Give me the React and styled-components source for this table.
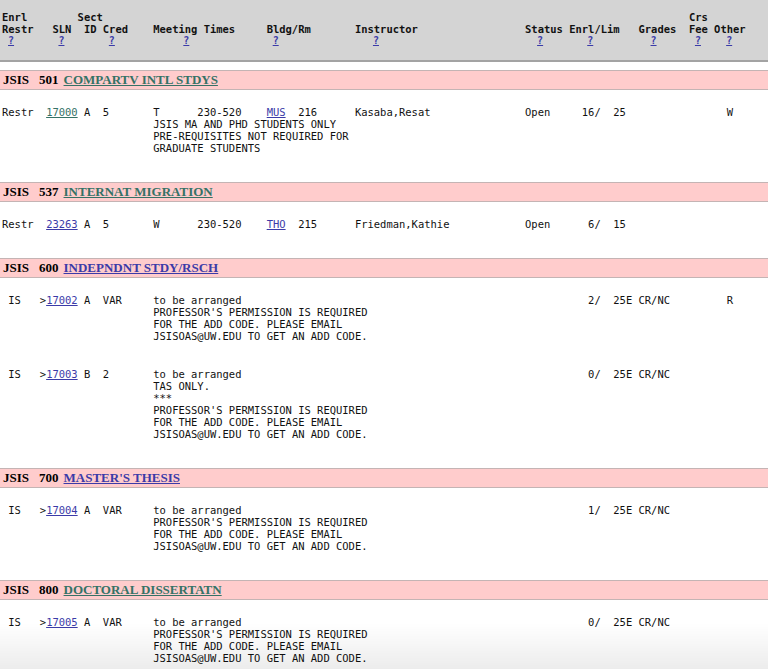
import styled, { createGlobalStyle } from "styled-components";

const GlobalStyle = createGlobalStyle`
  html, body {
    margin: 0;
    padding: 0;
    background: #ffffff;
  }
`;

const MONO = `"DejaVu Sans Mono", "Liberation Mono", monospace`;
const SERIF = `"Liberation Serif", "Times New Roman", serif`;
const TEAL = "#357266";
const BLUE = "#3b3ba8";

const Page = styled.div`
  font-family: ${MONO};
  font-size: 10.47px;
  line-height: 12px;
  color: #111;
  min-height: 669px;
`;

const HeaderBar = styled.div`
  background: #d4d4d4;
  border-bottom: 2px solid #a3a3a3;
  padding: 11px 2px 13px;
  margin-bottom: 8px;
`;

const HeaderGrid = styled.div`
  display: grid;
  grid-template-columns: 8ch 4ch 4ch 8ch 18ch 14ch 27ch 7ch 11ch 8ch 4ch 1fr;
  font-weight: bold;
  color: #111;
`;

const HeadCell = styled.div`
  display: flex;
  flex-direction: column;
  white-space: pre;
`;

const HeadLine = styled.span`
  height: 12px;
`;

const HelpLink = styled.a`
  margin-left: ${(p) => p.$indent}ch;
  align-self: flex-start;
  color: ${BLUE};
  font-size: 10px;
  text-decoration: underline;
  height: 12px;
`;

const CourseBar = styled.div`
  display: flex;
  align-items: center;
  height: 18px;
  padding-left: 3px;
  background: #ffcccc;
  border-top: 1px solid #c4b4b4;
  border-bottom: 1px solid #c4b4b4;
  font-family: ${SERIF};
  font-size: 13px;
  font-weight: bold;
  color: #000;
  margin-bottom: 16px;
`;

const CourseNum = styled.span`
  margin-left: 10px;
`;

const CourseTitle = styled.a`
  margin-left: 5px;
  color: ${(p) => (p.$visited ? TEAL : BLUE)};
  text-decoration: underline;
`;

const Section = styled.section`
  display: flex;
  flex-direction: column;
  margin-bottom: 28px;
`;

const Rows = styled.div`
  display: flex;
  flex-direction: column;
  gap: 26px;
  padding-left: 2px;
`;

const Row = styled.div`
  display: grid;
  grid-template-columns: 6ch 7ch 3ch 8ch 7ch 11ch 5ch 9ch 27ch 9ch 5ch 4ch 8ch 6ch 1fr;
  grid-auto-rows: 12px;
`;

const Cell = styled.span`
  white-space: pre;
  grid-column: ${(p) => p.$span || "auto"};
`;

const Note = styled.span`
  white-space: pre;
  grid-column: 5 / -1;
`;

const DataLink = styled.a`
  color: ${(p) => (p.$visited ? TEAL : BLUE)};
  text-decoration: underline;
`;

const BottomFade = styled.div`
  position: fixed;
  left: 0;
  right: 0;
  bottom: 0;
  height: 46px;
  pointer-events: none;
  background: linear-gradient(rgba(0, 0, 0, 0), rgba(0, 0, 0, 0.075));
`;

const headers = [
  { top: "Enrl", label: "Restr", q: 1 },
  { top: "", label: "SLN", q: 1 },
  { top: "Sect", label: " ID" },
  { top: "", label: "Cred", q: 1 },
  { top: "", label: "Meeting Times", q: 5 },
  { top: "", label: "Bldg/Rm", q: 1 },
  { top: "", label: "Instructor", q: 3 },
  { top: "", label: "Status", q: 2 },
  { top: "", label: "Enrl/Lim", q: 3 },
  { top: "", label: "Grades", q: 2 },
  { top: "Crs", label: "Fee", q: 1 },
  { top: "", label: "Other", q: 2 },
];

const permission = [
  "PROFESSOR'S PERMISSION IS REQUIRED",
  "FOR THE ADD CODE. PLEASE EMAIL",
  "JSISOAS@UW.EDU TO GET AN ADD CODE.",
];

const sections = [
  {
    num: "501",
    title: "COMPARTV INTL STDYS",
    visited: true,
    rows: [
      {
        restr: "Restr", sln: "17000", slnVisited: true, sect: "A", cred: "5",
        days: "T", time: "230-520", bldg: "MUS", room: "216",
        instr: "Kasaba,Resat", status: "Open", enrl: "16", lim: "25", other: "W",
        notes: ["JSIS MA AND PHD STUDENTS ONLY", "PRE-REQUISITES NOT REQUIRED FOR", "GRADUATE STUDENTS"],
      },
    ],
  },
  {
    num: "537",
    title: "INTERNAT MIGRATION",
    visited: true,
    rows: [
      {
        restr: "Restr", sln: "23263", sect: "A", cred: "5",
        days: "W", time: "230-520", bldg: "THO", room: "215",
        instr: "Friedman,Kathie", status: "Open", enrl: "6", lim: "15", notes: [],
      },
    ],
  },
  {
    num: "600",
    title: "INDEPNDNT STDY/RSCH",
    rows: [
      {
        restr: " IS", sln: "17002", open: true, sect: "A", cred: "VAR",
        arranged: true, enrl: "2", lim: "25E", grades: "CR/NC", other: "R",
        notes: permission,
      },
      {
        restr: " IS", sln: "17003", open: true, sect: "B", cred: "2",
        arranged: true, enrl: "0", lim: "25E", grades: "CR/NC",
        notes: ["TAS ONLY.", "***", ...permission],
      },
    ],
  },
  {
    num: "700",
    title: "MASTER'S THESIS",
    rows: [
      {
        restr: " IS", sln: "17004", open: true, sect: "A", cred: "VAR",
        arranged: true, enrl: "1", lim: "25E", grades: "CR/NC", notes: permission,
      },
    ],
  },
  {
    num: "800",
    title: "DOCTORAL DISSERTATN",
    visited: true,
    rows: [
      {
        restr: " IS", sln: "17005", open: true, sect: "A", cred: "VAR",
        arranged: true, enrl: "0", lim: "25E", grades: "CR/NC", notes: permission,
      },
    ],
  },
];

function ClassRow({ row }) {
  return (
    <Row>
      <Cell>{row.restr}</Cell>
      <Cell>
        {row.open ? ">" : " "}
        <DataLink href="#" $visited={row.slnVisited}>{row.sln}</DataLink>
      </Cell>
      <Cell>{row.sect}</Cell>
      <Cell>{row.cred}</Cell>
      {row.arranged ? (
        <Cell $span="5 / 10">to be arranged</Cell>
      ) : (
        <>
          <Cell>{row.days}</Cell>
          <Cell>{row.time}</Cell>
          <Cell>
            <DataLink href="#">{row.bldg}</DataLink>
          </Cell>
          <Cell>{row.room}</Cell>
          <Cell>{row.instr}</Cell>
        </>
      )}
      <Cell>{row.status || ""}</Cell>
      <Cell>{row.enrl.padStart(2) + "/"}</Cell>
      <Cell>{row.lim.padStart(2)}</Cell>
      <Cell>{row.grades || ""}</Cell>
      <Cell>{row.fee || ""}</Cell>
      <Cell>{row.other || ""}</Cell>
      {row.notes.map((n, i) => (
        <Note key={i}>{n}</Note>
      ))}
    </Row>
  );
}

export default function App() {
  return (
    <Page>
      <GlobalStyle />
      <HeaderBar>
        <HeaderGrid>
          {headers.map((h) => (
            <HeadCell key={h.label}>
              <HeadLine>{h.top}</HeadLine>
              <HeadLine>{h.label}</HeadLine>
              {h.q !== undefined ? (
                <HelpLink href="#" $indent={h.q}>?</HelpLink>
              ) : (
                <HeadLine />
              )}
            </HeadCell>
          ))}
        </HeaderGrid>
      </HeaderBar>
      {sections.map((s) => (
        <Section key={s.num}>
          <CourseBar>
            <span>JSIS</span>
            <CourseNum>{s.num}</CourseNum>
            <CourseTitle href="#" $visited={s.visited}>{s.title}</CourseTitle>
          </CourseBar>
          <Rows>
            {s.rows.map((r) => (
              <ClassRow key={r.sln} row={r} />
            ))}
          </Rows>
        </Section>
      ))}
      <BottomFade />
    </Page>
  );
}
